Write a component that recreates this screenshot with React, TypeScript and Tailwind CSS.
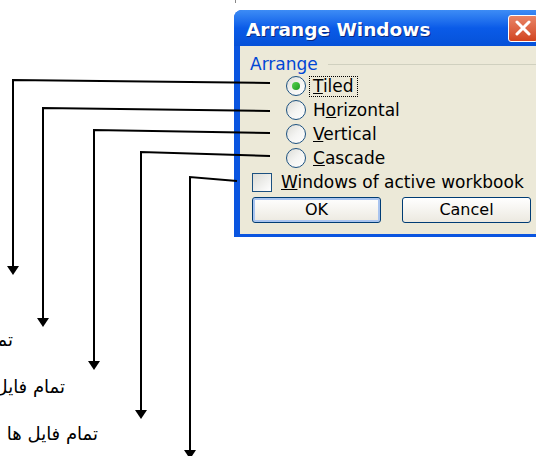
import React from 'react';

const font = { fontFamily: '"DejaVu Sans", Verdana, sans-serif' };

function Radio({ checked }: { checked?: boolean }) {
  return (
    <span className="relative flex h-[20px] w-[20px] items-center justify-center rounded-full border border-[#1c5180] bg-gradient-to-br from-[#dcdcd6] via-[#f4f4f2] to-white">
      {checked && <span className="h-[8px] w-[8px] rounded-full bg-gradient-to-br from-[#55d34f] to-[#1b9a21]" />}
    </span>
  );
}

function RadioRow({ label, checked }: { label: React.ReactNode; checked?: boolean }) {
  return (
    <div className="flex h-[24px] items-center pl-[46px]">
      <Radio checked={checked} />
      <span
        className={
          checked
            ? 'ml-[3px] border border-dotted border-black px-[3px] leading-[19px]'
            : 'ml-[7px] leading-[19px]'
        }
      >
        {label}
      </span>
    </div>
  );
}

function Dialog() {
  return (
    <div
      className="absolute left-[234px] top-[10px] w-[320px] overflow-hidden rounded-tl-[8px] bg-[#0a55e0] text-[17px] text-black"
      style={font}
    >
      <div className="flex h-[36px] items-center justify-between bg-gradient-to-b from-[#3d8cf5] via-[#0a5be8] to-[#0651d8] pl-[12px]">
        <span className="pt-[4px] text-[18.5px] font-bold text-white [text-shadow:1px_1px_0_#0a2a80]">Arrange Windows</span>
        <span className="mr-[16px] flex h-[27px] w-[30px] items-center justify-center rounded-[3px] border border-white bg-gradient-to-b from-[#e98466] to-[#d1431d]">
          <svg width="18" height="16" viewBox="0 0 18 16">
            <path d="M3 2 L15 14 M15 2 L3 14" stroke="white" strokeWidth="3" strokeLinecap="round" />
          </svg>
        </span>
      </div>
      <div className="mb-[3px] ml-[6px] bg-[#ece9d8] pb-[11px] pt-[8px]">
        <div className="flex h-[20px] items-center pl-[10px]">
          <span className="leading-[18px] text-[#0046d5]">Arrange</span>
          <span className="ml-[10px] mr-[4px] h-px flex-1 bg-[#d0d0bf]" />
        </div>
        <RadioRow checked label={<><u>T</u>iled</>} />
        <RadioRow label={<>H<u>o</u>rizontal</>} />
        <RadioRow label={<><u>V</u>ertical</>} />
        <RadioRow label={<><u>C</u>ascade</>} />
        <div className="flex h-[24px] items-center pl-[12px]">
          <span className="h-[19px] w-[20px] border border-[#1c5180] bg-gradient-to-br from-[#dcdcd6] to-white" />
          <span className="ml-[9px] leading-[19px]">
            <u>W</u>indows of active workbook
          </span>
        </div>
        <div className="mt-[3px] flex gap-[21px] pl-[12px]">
          <button className="h-[26px] w-[129px] rounded-[3px] border border-[#003c74] bg-gradient-to-b from-white to-[#ece9e0] text-[16px] shadow-[inset_0_0_0_2px_#a9c4ef]">
            OK
          </button>
          <button className="h-[26px] w-[129px] rounded-[3px] border border-[#003c74] bg-gradient-to-b from-white to-[#ece9e0] text-[16px]">
            Cancel
          </button>
        </div>
      </div>
    </div>
  );
}

function Arrows() {
  const lines = [
    { x: 13, y1: 80, y2: 83, x2: 270, tip: 275 },
    { x: 43, y1: 108, y2: 111, x2: 270, tip: 327 },
    { x: 94, y1: 130, y2: 133, x2: 270, tip: 370 },
    { x: 141, y1: 152, y2: 156, x2: 270, tip: 419 },
    { x: 190, y1: 177, y2: 181, x2: 237, tip: 459 },
  ];
  return (
    <svg className="absolute left-0 top-0" width="536" height="456" viewBox="0 0 536 456">
      {lines.map((l, i) => (
        <g key={i}>
          <polyline
            points={`${l.x2},${l.y2} ${l.x},${l.y1} ${l.x},${l.tip - 8}`}
            fill="none"
            stroke="black"
            strokeWidth="2"
          />
          <polygon points={`${l.x - 6},${l.tip - 9} ${l.x + 6},${l.tip - 9} ${l.x},${l.tip}`} fill="black" />
        </g>
      ))}
    </svg>
  );
}

export default function App() {
  return (
    <div className="relative h-[456px] w-[536px] overflow-hidden bg-white">
      <span className="absolute left-[235px] top-0 h-[3px] w-px bg-[#888]" />
      <Dialog />
      <Arrows />
      <div className="text-[18px] text-black" style={font}>
        <div dir="rtl" className="absolute right-[523px] top-[326px] whitespace-nowrap">
          تمام فایل ها
        </div>
        <div dir="rtl" className="absolute right-[471px] top-[373px] whitespace-nowrap">
          تمام فایل ها
        </div>
        <div dir="rtl" className="absolute right-[438px] top-[420px] whitespace-nowrap">
          تمام فایل ها
        </div>
      </div>
    </div>
  );
}
